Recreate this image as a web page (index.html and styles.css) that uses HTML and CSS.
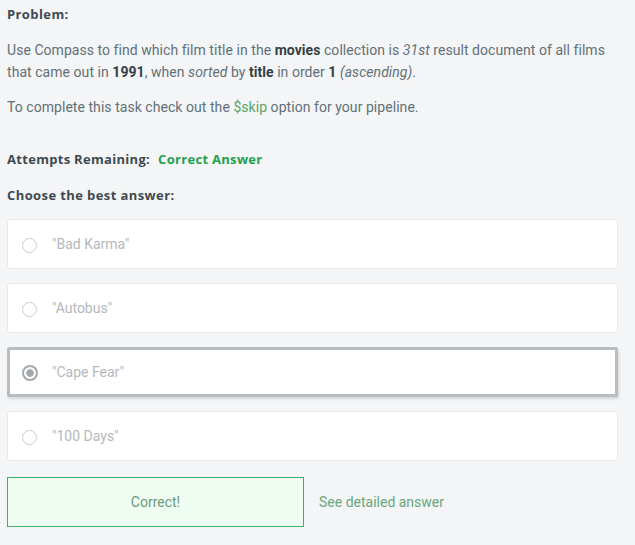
FILE: index.html
```html
<!DOCTYPE html>
<html>
<head>
<meta charset="utf-8">
<link rel="stylesheet" href="styles.css">
</head>
<body>
<div class="page">
  <div class="heading">Problem:</div>
  <p class="text first">Use Compass to find which film title in the <b>movies</b> collection is <i>31st</i> result document of all films that came out in <b>1991</b>, when <i>sorted</i> by <b>title</b> in order <b>1</b> <i>(ascending)</i>.</p>
  <p class="text second">To complete this task check out the <span class="code">$skip</span> option for your pipeline.</p>
  <div class="heading attempts">Attempts Remaining:<span class="ok">Correct Answer</span></div>
  <div class="heading choose">Choose the best answer:</div>
  <div class="options">
    <div class="option"><span class="radio"></span><span class="label">"Bad Karma"</span></div>
    <div class="option"><span class="radio"></span><span class="label">"Autobus"</span></div>
    <div class="option selected"><span class="radio checked"></span><span class="label">"Cape Fear"</span></div>
    <div class="option"><span class="radio"></span><span class="label">"100 Days"</span></div>
  </div>
  <div class="actions">
    <div class="correct">Correct!</div>
    <a class="detail">See detailed answer</a>
  </div>
</div>
</body>
</html>
```
FILE: styles.css
```css
html, body {
  margin: 0;
  padding: 0;
  background: #f4f5f7;
}
body {
  font-family: Roboto, "Liberation Sans", sans-serif;
  color: #5f6b72;
  width: 635px;
  height: 545px;
  overflow: hidden;
}
.page {
  padding: 5px 17px 0 7px;
  display: flex;
  flex-direction: column;
}
.heading {
  font-family: "Open Sans", Roboto, sans-serif;
  font-size: 13px;
  font-weight: bold;
  color: #3d4a52;
  letter-spacing: 0.4px;
  line-height: 18px;
}
.attempts { letter-spacing: 0.3px; }
.text {
  margin: 0;
  font-size: 14px;
  line-height: 22px;
  color: #627077;
  letter-spacing: 0.05px;
}
.text b { color: #343f45; }
.text.first { margin-top: 16px; }
.text.second { margin-top: 13px; }
.code { color: #5aa56b; }
.attempts { margin-top: 32px; }
.ok { color: #1fa04f; margin-left: 8px; }
.choose { margin-top: 18px; }
.options {
  margin-top: 15px;
  display: flex;
  flex-direction: column;
  gap: 14px;
}
.option {
  height: 48px;
  background: #fff;
  border: 1px solid #e7e9eb;
  border-radius: 3px;
  display: flex;
  align-items: center;
  padding-left: 14px;
  box-sizing: content-box;
}
.option.selected {
  height: 44px;
  border: 3px solid #b8bdc0;
  border-radius: 2px;
  padding-left: 12px;
  box-shadow: 1px 2px 3px rgba(0,0,0,0.12);
}
.radio {
  width: 15px;
  height: 15px;
  border: 1px solid #c9cdd0;
  border-radius: 50%;
  box-sizing: border-box;
  margin-top: 3px;
  flex: none;
}
.radio.checked {
  width: 16px;
  height: 16px;
  border: 2px solid #a3a9ad;
  background: radial-gradient(circle, #a3a9ad 0 3.5px, #fff 4px);
  margin-top: 2px;
}
.label {
  margin-left: 15px;
  font-size: 14px;
  color: #b4b9bc;
}
.selected .label { margin-left: 14px; }
.actions {
  margin-top: 16px;
  display: flex;
  align-items: center;
  gap: 15px;
}
.correct {
  width: 295px;
  height: 48px;
  border: 1px solid #3eae6a;
  background: #effcf2;
  color: #6c9a7c;
  font-size: 14px;
  display: flex;
  align-items: center;
  justify-content: center;
}
.detail {
  color: #69a77c;
  font-size: 14px;
}
```
